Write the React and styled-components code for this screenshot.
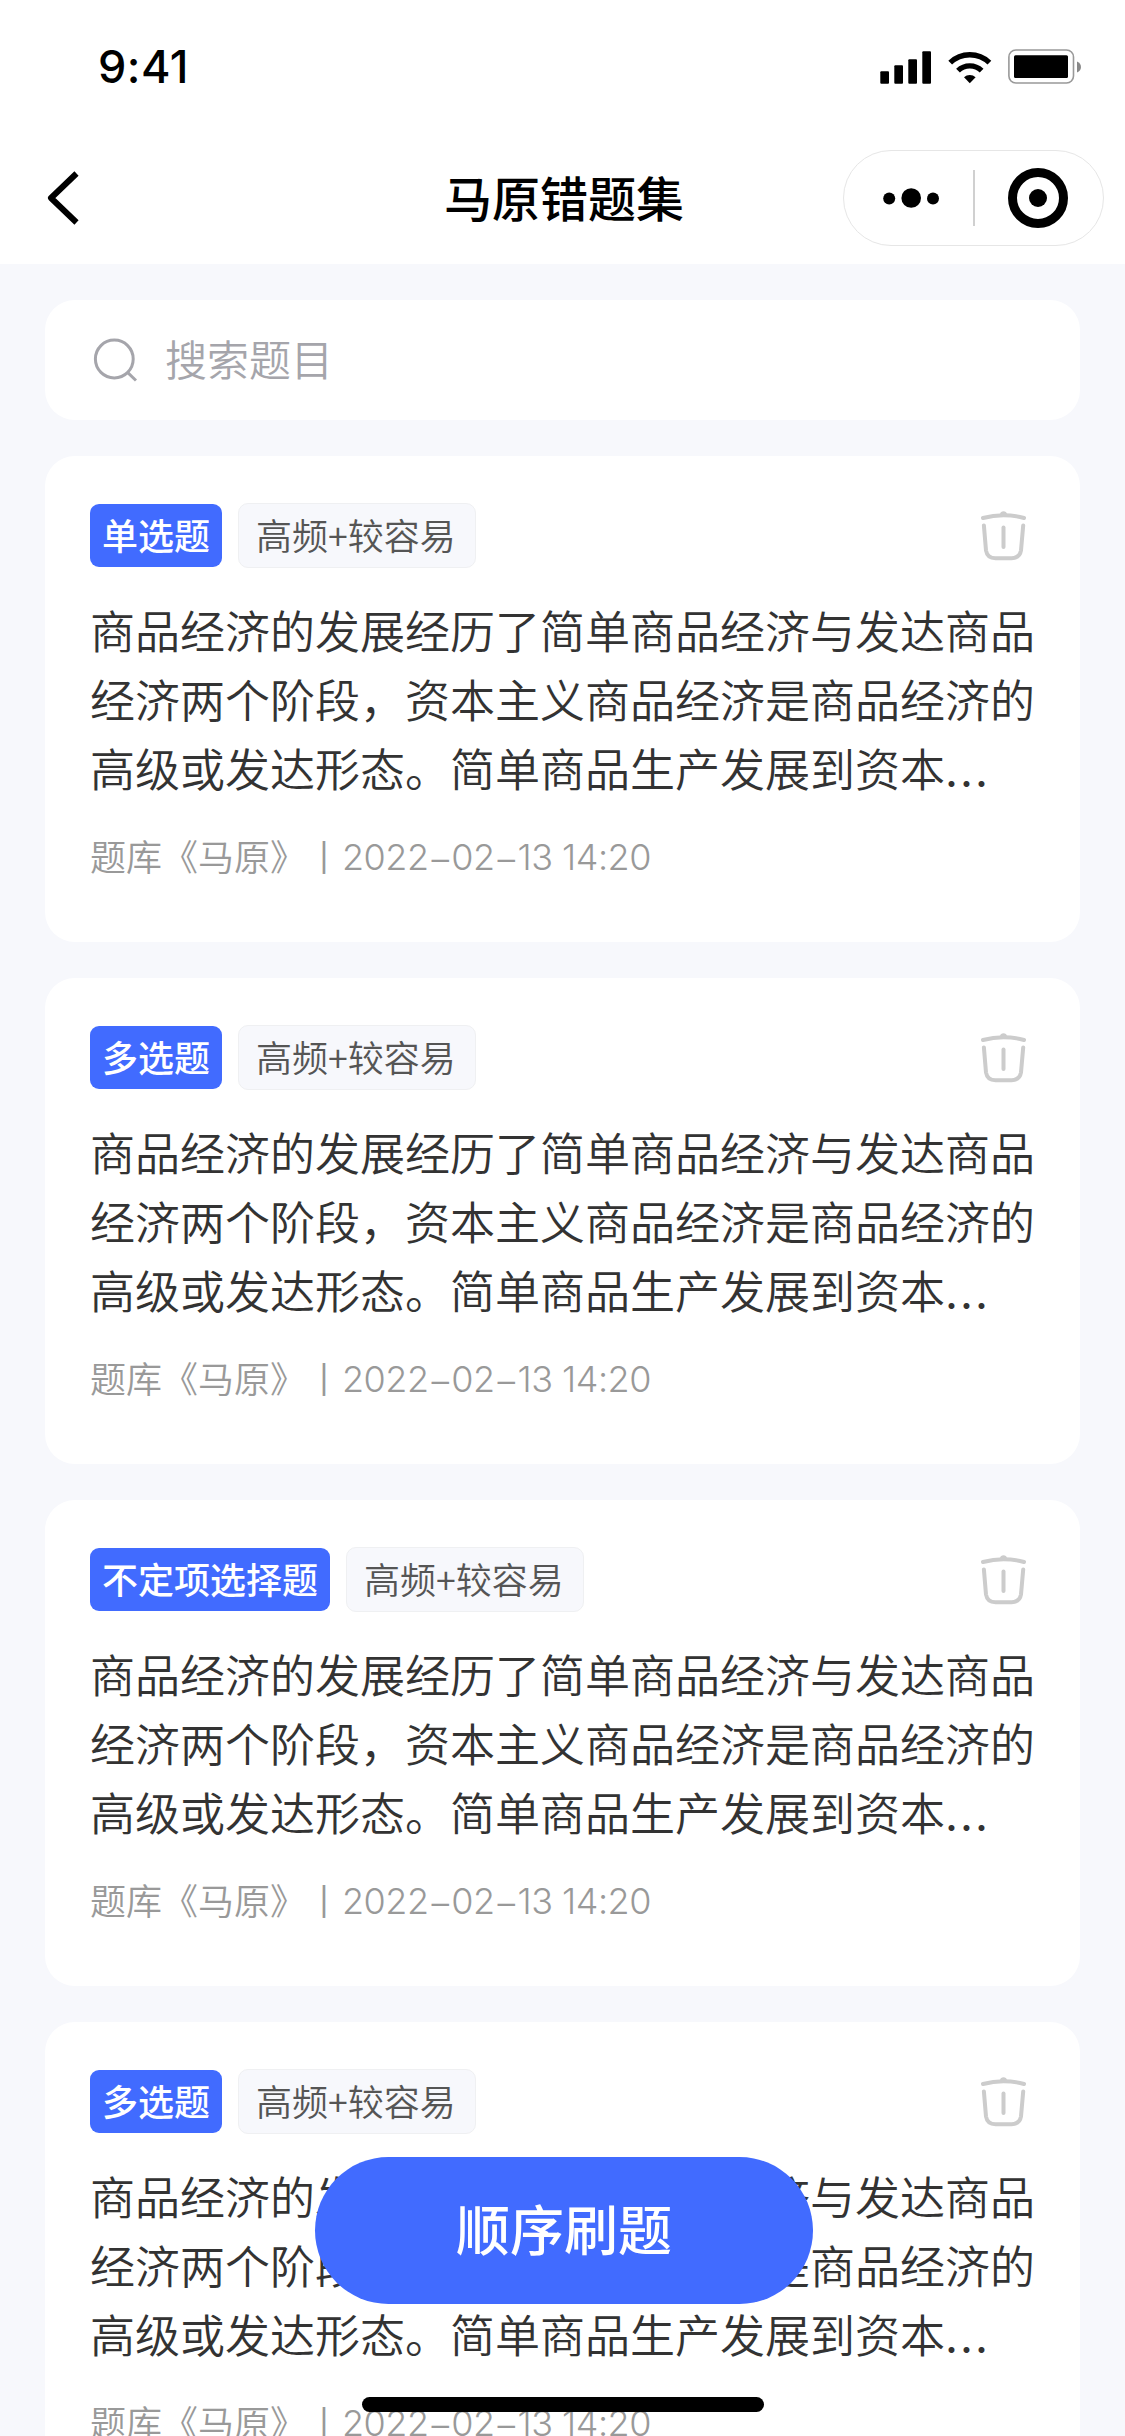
import React from 'react';
import styled, { createGlobalStyle } from 'styled-components';

const GlobalStyle = createGlobalStyle`
  * {
    box-sizing: border-box;
  }

  body {
    margin: 0;
    background: #f7f8fc;
    font-family: 'Noto Sans CJK SC', sans-serif;
  }

  button {
    padding: 0;
    border: 0;
    background: none;
    font-family: inherit;
  }
`;

const Page = styled.div`
  position: relative;
  width: 1125px;
  height: 2436px;
  overflow: hidden;
  background: #f7f8fc;
`;

const Header = styled.header`
  height: 264px;
  background: #fff;
`;

const StatusBar = styled.div`
  display: flex;
  align-items: center;
  justify-content: space-between;
  height: 132px;
  padding: 2px 43px 0 98px;
`;

const Time = styled.span`
  font-family: 'Inter', sans-serif;
  font-size: 45px;
  font-weight: 500;
  line-height: 54px;
  letter-spacing: 0.5px;
`;

const StatusIcons = styled.div`
  display: flex;
  align-items: center;
  gap: 16px;
`;

const NavBar = styled.div`
  display: grid;
  grid-template-columns: 1fr auto 1fr;
  align-items: center;
  height: 132px;
  padding: 0 21px 0 45px;
`;

const BackButton = styled.button`
  display: flex;
  justify-self: start;
`;

const Title = styled.h1`
  margin: 0 0 5px -21px;
  color: #000;
  font-size: 48px;
  font-weight: 500;
  line-height: 66px;
`;

const Capsule = styled.div`
  display: flex;
  align-items: center;
  justify-self: end;
  width: 261px;
  height: 96px;
  padding: 0 34px 0 38px;
  border: 1.5px solid #e6e6e6;
  border-radius: 48px;
`;

const CapsuleDivider = styled.span`
  width: 2px;
  height: 56px;
  margin: 0 33px 0 29px;
  background: #d0d0d0;
`;

const Content = styled.main`
  display: flex;
  flex-direction: column;
  gap: 36px;
  padding: 36px 45px;
`;

const SearchBox = styled.div`
  display: flex;
  align-items: center;
  gap: 28px;
  height: 120px;
  padding: 0 48px;
  border-radius: 30px;
  background: #fff;
`;

const Placeholder = styled.span`
  padding-bottom: 4px;
  color: #a5a5ab;
  font-size: 42px;
  font-weight: 350;
  line-height: 60px;
`;

const Card = styled.article`
  height: 486px;
  padding: 47px 45px 0;
  border-radius: 30px;
  background: #fff;
`;

const TagRow = styled.div`
  display: flex;
  align-items: center;
  gap: 16px;
  height: 65px;
`;

const TypeTag = styled.span`
  height: 63px;
  padding: 0 12px;
  border-radius: 9px;
  background: #416bff;
  color: #fff;
  font-size: 36px;
  font-weight: 500;
  line-height: 60px;
`;

const LevelTag = styled.span`
  height: 65px;
  padding: 0 19px 0 17px;
  border: 1px solid #eff0f2;
  border-radius: 10px;
  background: #f7f8fc;
  color: #555;
  font-size: 36px;
  font-weight: 350;
  line-height: 60px;
`;

const DeleteButton = styled.button`
  display: flex;
  margin: 0 9px 0 auto;
`;

const Question = styled.p`
  margin: 27px 0 0;
  color: #333;
  font-size: 45px;
  font-weight: 350;
  line-height: 69px;
  white-space: nowrap;
`;

const Line = styled.span`
  display: block;
`;

const Ellipsis = styled.span`
  font-family: 'Inter', sans-serif;
  font-weight: 400;
  letter-spacing: 2px;
  line-height: 1;
`;

const Meta = styled.div`
  display: flex;
  align-items: center;
  height: 50px;
  margin-top: 28px;
  color: #999;
  font-size: 36px;
  font-weight: 350;
  line-height: 50px;
`;

const DateText = styled.time`
  padding-top: 3px;
  font-family: 'Inter', sans-serif;
  font-size: 36px;
  font-weight: 350;
  letter-spacing: -0.5px;
`;

const Dash = styled.span`
  display: inline-block;
  margin: 0 3.5px;
  transform: translateY(2px) scaleX(1.6);
`;

const StartButton = styled.button`
  position: absolute;
  bottom: 132px;
  left: 315px;
  width: 498px;
  height: 147px;
  padding-bottom: 6px;
  border-radius: 74px;
  background: #416bff;
  color: #fff;
  font-size: 54px;
  font-weight: 500;
  line-height: 80px;
`;

const HomeIndicator = styled.div`
  position: absolute;
  bottom: 24px;
  left: 362px;
  width: 402px;
  height: 15px;
  border-radius: 7.5px;
  background: #000;
`;

const questions = [
  { id: 1, type: '单选题' },
  { id: 2, type: '多选题' },
  { id: 3, type: '不定项选择题' },
  { id: 4, type: '多选题' },
];

const SignalIcon = () => (
  <svg width="52" height="34" viewBox="0 0 52 34">
    <rect x="0.3" y="21.3" width="8.7" height="12.4" rx="1" />
    <rect x="14.3" y="15.3" width="8.7" height="18.4" rx="1" />
    <rect x="28.3" y="9.3" width="8.7" height="24.4" rx="1" />
    <rect x="42.3" y="1.3" width="8.7" height="32.4" rx="1" />
  </svg>
);

const WifiIcon = () => (
  <svg width="44" height="34" viewBox="0 0 44 34">
    <g fill="none" stroke="#000" strokeWidth="5.4">
      <path d="M2.2 12.6a28.2 28.2 0 0 1 39.2 0" />
      <path d="M10 20.6a17 17 0 0 1 23.6 0" />
    </g>
    <path d="M21.8 33.2l-5.8-6a8.4 8.4 0 0 1 11.6 0z" />
  </svg>
);

const BatteryIcon = () => (
  <svg width="74" height="36" viewBox="0 0 74 36">
    <rect
      x="0.9"
      y="1"
      width="64.6"
      height="33"
      rx="7"
      fill="none"
      stroke="#999"
      strokeWidth="1.6"
    />
    <rect x="6" y="6.3" width="54" height="22.6" rx="1.5" />
    <path d="M69 12.5c5.3 2 5.3 9 0 11z" fill="#888" />
  </svg>
);

const BackIcon = () => (
  <svg width="36" height="54" viewBox="0 0 36 54">
    <path
      d="M31.5 2.5L6 27l25.5 24.5"
      fill="none"
      stroke="#000"
      strokeWidth="6"
      strokeLinejoin="round"
    />
  </svg>
);

const MoreIcon = () => (
  <svg width="62" height="20" viewBox="0 0 62 20">
    <circle cx="7.2" cy="10.5" r="6" />
    <circle cx="29.2" cy="10" r="9.8" />
    <circle cx="51" cy="10.5" r="6" />
  </svg>
);

const TargetIcon = () => (
  <svg width="60" height="60" viewBox="0 0 60 60">
    <circle cx="30" cy="30" r="25.5" fill="none" stroke="#000" strokeWidth="9" />
    <circle cx="30" cy="30" r="9" />
  </svg>
);

const SearchIcon = () => (
  <svg width="44" height="44" viewBox="0 0 44 44" fill="none" stroke="#a5a5ab" strokeWidth="3">
    <circle cx="21.3" cy="21" r="18.9" />
    <path d="M34.5 34.3l8.5 8.2" />
  </svg>
);

const TrashIcon = () => (
  <svg
    width="45"
    height="51"
    viewBox="0 0 45 51"
    fill="none"
    stroke="#ccc"
    strokeWidth="4"
    strokeLinecap="round"
  >
    <path d="M2 8C15 4.4 30 4.4 43 8" />
    <path d="M19 4a3.6 3.6 0 0 1 7 0z" fill="#ccc" stroke="none" />
    <path d="M2.9 15.5L5 40.5q1.3 7.7 9.5 7.7h16q8.2 0 9.5-7.7L42.2 15.5" />
    <path d="M22.5 17.5v19.5" />
  </svg>
);

const QuestionCard = ({ type }) => (
  <Card>
    <TagRow>
      <TypeTag>{type}</TypeTag>
      <LevelTag>高频+较容易</LevelTag>
      <DeleteButton aria-label="删除">
        <TrashIcon />
      </DeleteButton>
    </TagRow>
    <Question>
      <Line>商品经济的发展经历了简单商品经济与发达商品</Line>
      <Line>经济两个阶段，资本主义商品经济是商品经济的</Line>
      <Line>
        高级或发达形态。简单商品生产发展到资本<Ellipsis>...</Ellipsis>
      </Line>
    </Question>
    <Meta>
      <span>题库《马原》丨</span>
      <DateText>
        2022<Dash>-</Dash>02<Dash>-</Dash>13 14:20
      </DateText>
    </Meta>
  </Card>
);

const App = () => {
  return (
    <Page>
      <GlobalStyle />
      <Header>
        <StatusBar>
          <Time>9:41</Time>
          <StatusIcons>
            <SignalIcon />
            <WifiIcon />
            <BatteryIcon />
          </StatusIcons>
        </StatusBar>
        <NavBar>
          <BackButton aria-label="返回">
            <BackIcon />
          </BackButton>
          <Title>马原错题集</Title>
          <Capsule>
            <MoreIcon />
            <CapsuleDivider />
            <TargetIcon />
          </Capsule>
        </NavBar>
      </Header>

      <Content>
        <SearchBox>
          <SearchIcon />
          <Placeholder>搜索题目</Placeholder>
        </SearchBox>
        {questions.map((question) => (
          <QuestionCard key={question.id} type={question.type} />
        ))}
      </Content>

      <StartButton>顺序刷题</StartButton>
      <HomeIndicator />
    </Page>
  );
};

export default App;
